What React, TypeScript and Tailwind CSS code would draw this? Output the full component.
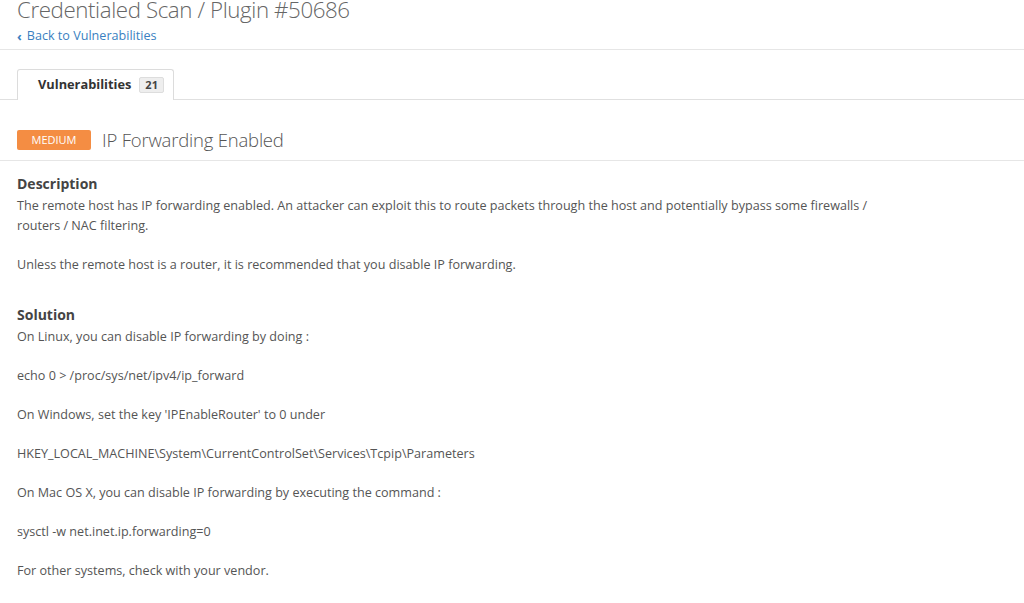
import React from "react";

export default function App() {
  const font = { fontFamily: '"Open Sans", "Liberation Sans", sans-serif' };
  const paras = [
    "On Linux, you can disable IP forwarding by doing :",
    "echo 0 > /proc/sys/net/ipv4/ip_forward",
    "On Windows, set the key 'IPEnableRouter' to 0 under",
    "HKEY_LOCAL_MACHINE\\System\\CurrentControlSet\\Services\\Tcpip\\Parameters",
    "On Mac OS X, you can disable IP forwarding by executing the command :",
    "sysctl -w net.inet.ip.forwarding=0",
    "For other systems, check with your vendor.",
  ];
  return (
    <div className="w-[1024px] h-[603px] overflow-hidden bg-white" style={font}>
      <div className="px-[17px] pb-[4px] border-b border-[#e6e6e6]">
        <h1 className="text-[22.3px] leading-[34px] mt-[-7px] text-[#666] font-light tracking-[-0.4px]">
          Credentialed Scan / Plugin #50686
        </h1>
        <a className="flex items-center gap-[5px] text-[12.6px] leading-[18px] text-[#3a7fc1]">
          <span className="text-[13px] font-bold">‹</span>
          <span>Back to Vulnerabilities</span>
        </a>
      </div>

      <div className="mt-[19px] flex items-end border-b border-[#e0e0e0]">
        <div className="w-[17px]" />
        <div className="h-[31px] w-[157px] border border-b-0 border-[#dcdcdc] rounded-t-[3px] bg-white flex items-center pl-[20px] gap-[8px] mb-[-1px]">
          <span className="text-[12.8px] font-bold text-[#333]">Vulnerabilities</span>
          <span className="text-[11px] font-bold text-[#444] bg-[#eeeeee] border border-[#dddddd] rounded-[2px] px-[5px] leading-[14px]">
            21
          </span>
        </div>
      </div>

      <div className="mt-[29px] flex items-center gap-[11px] px-[17px] pb-[9px] border-b border-[#e6e6e6]">
        <span className="w-[74px] h-[20px] rounded-[2px] bg-[#f48d43] text-white text-[11px] flex items-center justify-center">
          MEDIUM
        </span>
        <span className="text-[18.5px] leading-[22px] text-[#555] font-light tracking-[-0.2px]">IP Forwarding Enabled</span>
      </div>

      <div className="px-[17px] max-w-[905px] text-[12.6px] leading-[19.5px] text-[#555]">
        <h3 className="mt-[10px] text-[14px] leading-[25px] font-bold text-[#444]">Description</h3>
        <p>
          The remote host has IP forwarding enabled. An attacker can exploit this to route packets through the host and
          potentially bypass some firewalls / routers / NAC filtering.
        </p>
        <p className="mt-[19.5px]">
          Unless the remote host is a router, it is recommended that you disable IP forwarding.
        </p>
        <h3 className="mt-[29px] text-[14px] leading-[24px] font-bold text-[#444]">Solution</h3>
        {paras.map((p, i) => (
          <p key={i} className={i === 0 ? "" : "mt-[19.5px]"}>
            {p}
          </p>
        ))}
      </div>
    </div>
  );
}
